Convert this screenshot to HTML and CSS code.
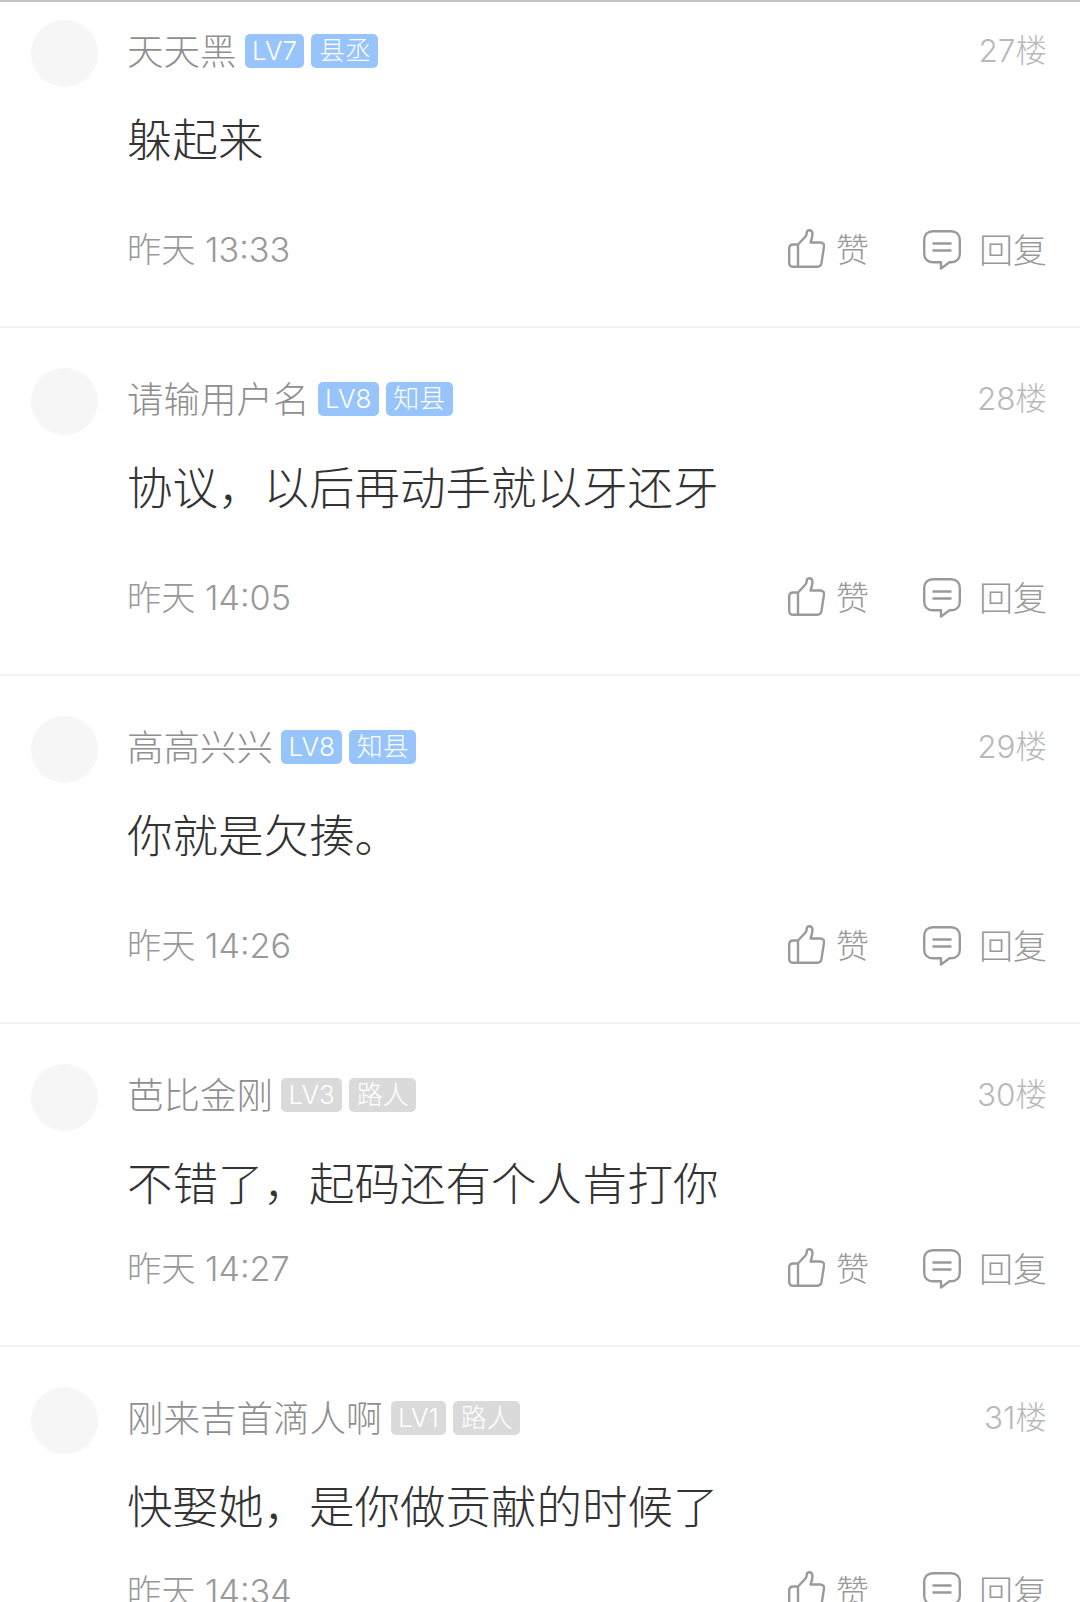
FILE: index.html
```html
<!DOCTYPE html>
<html lang="zh-CN">
<head>
    <meta charset="UTF-8">
    <meta name="viewport" content="width=device-width, initial-scale=1.0">
    <title>评论</title>
    <link rel="stylesheet" href="styles.css">
</head>
<body>
    <svg class="icon-defs" width="0" height="0">
        <symbol id="icon-like" viewBox="0 0 37 39">
            <path d="M10 15.5 17.5 7.5C18.6 6 18.8 4.6 18.8 3.4 18.8 .6 23.8 .2 24.4 4 24.8 6.8 23.6 10.6 22.6 13.5H32.4C35 13.5 36.4 15.4 36 17.6L33.4 34.4C33 36.6 31.6 37.8 29.4 37.8H5.2C2.8 37.8 1.2 36.4 1.2 34V19.2C1.2 16.8 2.8 15.5 5.2 15.5H10V37.8" fill="none" stroke="#9a9a9a" stroke-width="2.4" stroke-linejoin="round"/>
        </symbol>
        <symbol id="icon-reply" viewBox="0 0 38 40">
            <path d="M10 1.2H28C33.4 1.2 36.8 4.6 36.8 10V23.4C36.8 28.8 33.4 32.2 28 32.2H26.4L18 38.6V32.2H10C4.6 32.2 1.2 28.8 1.2 23.4V10C1.2 4.6 4.6 1.2 10 1.2Z" fill="none" stroke="#9a9a9a" stroke-width="2.4" stroke-linejoin="round"/>
            <path d="M9.5 13.5H28.5M9.5 20.5H28.5" fill="none" stroke="#9a9a9a" stroke-width="2.4"/>
        </symbol>
    </svg>

    <div class="comment-list">
        <div class="comment first">
            <div class="avatar"></div>
            <div class="comment-main">
                <div class="comment-head">
                    <span class="user-name">天天黑</span>
                    <span class="tag tag-blue">LV7</span>
                    <span class="tag tag-blue">县丞</span>
                    <span class="floor">27楼</span>
                </div>
                <div class="comment-text">躲起来</div>
                <div class="comment-foot">
                    <span class="comment-time">昨天 13:33</span>
                    <span class="action action-like"><svg class="icon-like"><use href="#icon-like"></use></svg><span class="like-label">赞</span></span>
                    <span class="action action-reply"><svg class="icon-reply"><use href="#icon-reply"></use></svg><span class="reply-label">回复</span></span>
                </div>
            </div>
        </div>

        <div class="comment">
            <div class="avatar"></div>
            <div class="comment-main">
                <div class="comment-head">
                    <span class="user-name">请输用户名</span>
                    <span class="tag tag-blue">LV8</span>
                    <span class="tag tag-blue">知县</span>
                    <span class="floor">28楼</span>
                </div>
                <div class="comment-text">协议，以后再动手就以牙还牙</div>
                <div class="comment-foot">
                    <span class="comment-time">昨天 14:05</span>
                    <span class="action action-like"><svg class="icon-like"><use href="#icon-like"></use></svg><span class="like-label">赞</span></span>
                    <span class="action action-reply"><svg class="icon-reply"><use href="#icon-reply"></use></svg><span class="reply-label">回复</span></span>
                </div>
            </div>
        </div>

        <div class="comment">
            <div class="avatar"></div>
            <div class="comment-main">
                <div class="comment-head">
                    <span class="user-name">高高兴兴</span>
                    <span class="tag tag-blue">LV8</span>
                    <span class="tag tag-blue">知县</span>
                    <span class="floor">29楼</span>
                </div>
                <div class="comment-text">你就是欠揍。</div>
                <div class="comment-foot">
                    <span class="comment-time">昨天 14:26</span>
                    <span class="action action-like"><svg class="icon-like"><use href="#icon-like"></use></svg><span class="like-label">赞</span></span>
                    <span class="action action-reply"><svg class="icon-reply"><use href="#icon-reply"></use></svg><span class="reply-label">回复</span></span>
                </div>
            </div>
        </div>

        <div class="comment compact">
            <div class="avatar"></div>
            <div class="comment-main">
                <div class="comment-head">
                    <span class="user-name">芭比金刚</span>
                    <span class="tag tag-gray">LV3</span>
                    <span class="tag tag-gray">路人</span>
                    <span class="floor">30楼</span>
                </div>
                <div class="comment-text">不错了，起码还有个人肯打你</div>
                <div class="comment-foot">
                    <span class="comment-time">昨天 14:27</span>
                    <span class="action action-like"><svg class="icon-like"><use href="#icon-like"></use></svg><span class="like-label">赞</span></span>
                    <span class="action action-reply"><svg class="icon-reply"><use href="#icon-reply"></use></svg><span class="reply-label">回复</span></span>
                </div>
            </div>
        </div>

        <div class="comment compact">
            <div class="avatar"></div>
            <div class="comment-main">
                <div class="comment-head">
                    <span class="user-name">刚来吉首滴人啊</span>
                    <span class="tag tag-gray">LV1</span>
                    <span class="tag tag-gray">路人</span>
                    <span class="floor">31楼</span>
                </div>
                <div class="comment-text">快娶她，是你做贡献的时候了</div>
                <div class="comment-foot">
                    <span class="comment-time">昨天 14:34</span>
                    <span class="action action-like"><svg class="icon-like"><use href="#icon-like"></use></svg><span class="like-label">赞</span></span>
                    <span class="action action-reply"><svg class="icon-reply"><use href="#icon-reply"></use></svg><span class="reply-label">回复</span></span>
                </div>
            </div>
        </div>
    </div>
</body>
</html>
```

FILE: styles.css
```css
html, body {
    margin: 0;
    height: 100%;
    overflow: hidden;
    background-color: #fff;
}
body {
    font-family: Inter, "Noto Sans CJK SC", sans-serif;
    font-weight: 300;
}
.icon-defs {
    display: block;
}
.comment-list {
    border-top: 2px solid #c4c4c4;
}
.comment {
    display: flex;
    padding: 40px 33px 48px 31px;
    border-bottom: 2px solid #f3f3f3;
}
.comment.first {
    padding-top: 18px;
}
.avatar {
    flex: none;
    width: 67px;
    height: 67px;
    border-radius: 50%;
    background-color: #f6f6f7;
}
.comment-main {
    flex: 1;
    margin-left: 29px;
}
.comment-head {
    display: flex;
    align-items: center;
    height: 62px;
    margin-top: -2px;
}
.user-name {
    font-size: 36.5px;
    color: #8f8f8f;
    margin-right: 8px;
}
.tag {
    height: 34px;
    line-height: 34px;
    padding: 0 7.5px;
    margin-top: 3px;
    margin-right: 7px;
    border-radius: 5px;
    font-size: 26px;
    color: #fff;
}
.tag-blue {
    background-color: #96c4fb;
}
.tag-gray {
    background-color: #dadada;
}
.floor {
    margin-left: auto;
    margin-bottom: 2px;
    font-size: 31.5px;
    color: #b9b9b9;
}
.comment-text {
    margin-top: 31px;
    height: 60px;
    line-height: 60px;
    font-size: 45.5px;
    color: #333;
}
.comment-foot {
    display: flex;
    align-items: center;
    height: 60px;
    margin-top: 47px;
}
.compact .comment-foot {
    margin-top: 22px;
}
.comment-time {
    margin-bottom: 3px;
    font-size: 34.2px;
    color: #999;
}
.action {
    display: flex;
    align-items: center;
    color: #999;
}
.action-like {
    margin-left: auto;
}
.action-reply {
    margin-left: 54px;
}
.icon-like {
    width: 37px;
    height: 39px;
}
.icon-reply {
    width: 38px;
    height: 40px;
    margin-top: 4px;
}
.like-label {
    margin-left: 11px;
    font-size: 33px;
}
.reply-label {
    margin-left: 18px;
    font-size: 34px;
}
```
